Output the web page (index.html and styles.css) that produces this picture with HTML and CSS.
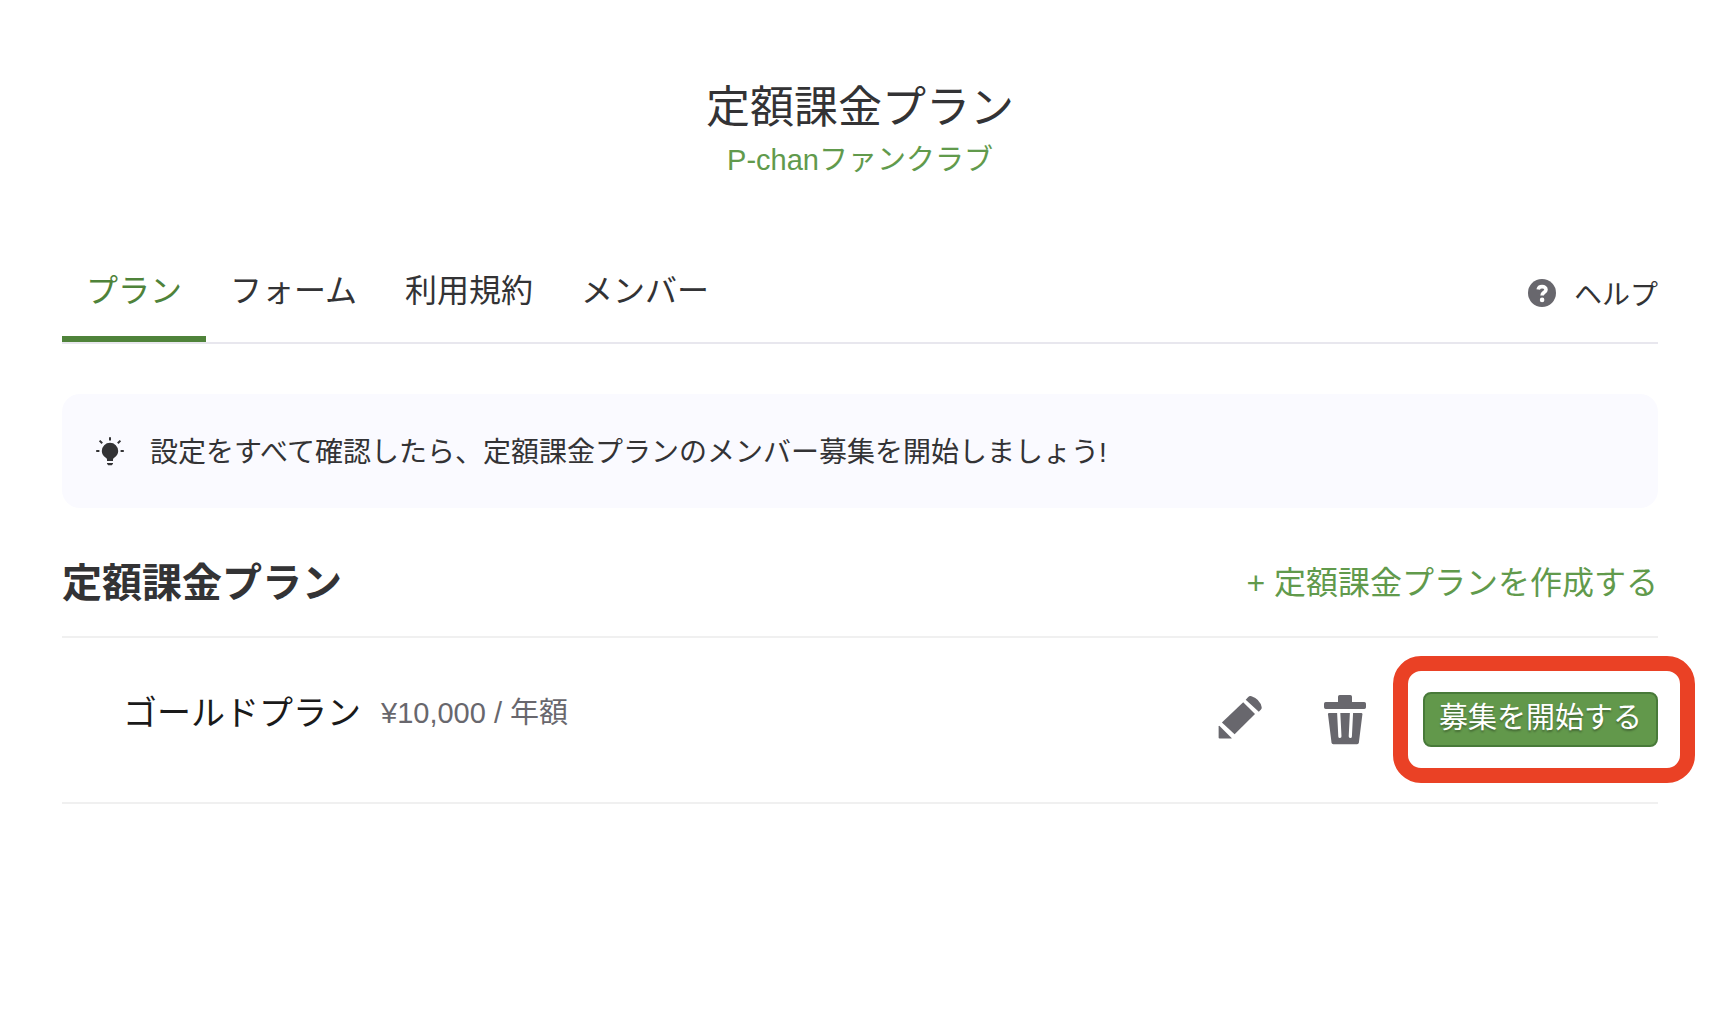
FILE: index.html
```html
<!DOCTYPE html>
<html lang="ja">
<head>
  <meta charset="UTF-8">
  <meta name="viewport" content="width=device-width, initial-scale=1.0">
  <title>定額課金プラン</title>
  <link rel="stylesheet" href="styles.css">
</head>
<body>
  <div class="container">
    <header class="page-header">
      <h1>定額課金プラン</h1>
      <a class="club" href="#">P-chanファンクラブ</a>
    </header>

    <nav class="tabs">
      <a class="tab active" href="#">プラン</a>
      <a class="tab" href="#">フォーム</a>
      <a class="tab" href="#">利用規約</a>
      <a class="tab" href="#">メンバー</a>
      <a class="help" href="#">
        <svg width="28" height="28" viewBox="0 0 28 28" aria-hidden="true">
          <circle cx="14" cy="14" r="14" fill="#68676d"/>
          <path d="M10.200 10.500c.4-2 1.900-2.900 3.900-2.900 2.200 0 3.900 1.200 3.900 3.100 0 2.700-3.900 2.600-3.900 5.800" fill="none" stroke="#fff" stroke-width="3.600"/>
          <circle cx="14.100" cy="20.900" r="2.300" fill="#fff"/>
        </svg>
        <span>ヘルプ</span>
      </a>
    </nav>

    <div class="notice">
      <svg width="28" height="32" viewBox="0 0 28 32" aria-hidden="true">
        <path d="M14 5.800a8.200 8.200 0 0 0-8.200 8.200c0 2.900 1.500 5 3.700 6.500 1 .7 1.500 1.300 1.500 2.300v1.200h6v-1.200c0-1 .5-1.600 1.500-2.300 2.200-1.500 3.700-3.600 3.700-6.500A8.200 8.200 0 0 0 14 5.800zM11 26h6v.8l-1.200 1.400h-3.600L11 26.800z" fill="#333335"/>
        <path d="M14 .3v3.200M.2 14h3.200M24.600 14h3.200M3.600 3.600l2.600 2.600M24.400 3.600l-2.600 2.600" stroke="#333335" stroke-width="2"/>
      </svg>
      <p>設定をすべて確認したら、定額課金プランのメンバー募集を開始しましょう!</p>
    </div>

    <section>
      <div class="section-header">
        <h2>定額課金プラン</h2>
        <a href="#">+ 定額課金プランを作成する</a>
      </div>
      <ul class="plan-list">
        <li class="plan">
          <span class="plan-name">ゴールドプラン</span>
          <span class="plan-price">¥10,000 / 年額</span>
          <div class="actions">
            <button class="icon-button edit" type="button" aria-label="編集">
              <svg width="44" height="44" viewBox="0 0 44 44" fill="#68676d" aria-hidden="true">
                <path d="M25.200 7.300 37 19 16.600 39.300 3.900 27.600z"/>
                <path d="M27.700 4.800 30 2.200Q31.500.6 33.500 1.200Q42 4 43.700 12.300Q43.900 13.500 43 14.400L40.800 16.800z"/>
                <path d="M1.300 30.800 13.800 43.200Q13.400 43.600 12.800 43.600H1.700Q.6 43.600.6 42.500V31.500z"/>
              </svg>
            </button>
            <button class="icon-button" type="button" aria-label="削除">
              <svg width="42" height="50" viewBox="0 0 42 50" fill="#68676d" aria-hidden="true">
                <path d="M15.700 0H26.300Q28 0 28 1.700V7H40.300Q42 7 42 8.700V12.300Q42 14 40.300 14H1.700Q0 14 0 12.300V8.700Q0 7 1.700 7H14V1.700Q14 0 15.700 0z"/>
                <path d="M5 18H37.400Q38.500 18 38.400 19.200L34.900 47.600Q34.700 49.200 33.100 49.200H9.300Q7.700 49.200 7.500 47.600L4 19.200Q3.900 18 5 18z"/>
                <path d="M14.700 17.500 15.900 41.400M27.500 17.500 26.300 41.400" fill="none" stroke="#fff" stroke-width="3.200" stroke-linecap="round"/>
              </svg>
            </button>
            <div class="highlight">
              <button class="start-button" type="button">募集を開始する</button>
            </div>
          </div>
        </li>
      </ul>
    </section>
  </div>
</body>
</html>
```
FILE: styles.css
```css
* {
  box-sizing: border-box;
}
body {
  margin: 0;
  font-family: "Liberation Sans", "Noto Sans CJK JP", sans-serif;
  color: #333335;
  background-color: #fff;
}
h1, h2, p, ul {
  margin: 0;
  padding: 0;
}
a {
  color: #619a4c;
  text-decoration: none;
}
svg {
  display: block;
}
.container {
  padding: 80px 60px 0 62px;
}
.page-header {
  text-align: center;
}
h1 {
  font-size: 44px;
  font-weight: 400;
  line-height: 56px;
}
.club {
  display: block;
  font-size: 29px;
  line-height: 48px;
}
.tabs {
  display: flex;
  margin-top: 56px;
  border-bottom: 2px solid #e8e7ee;
}
.tab {
  padding: 26px 24px 20px;
  border-bottom: 6px solid transparent;
  font-size: 32px;
  line-height: 50px;
  color: #333335;
}
.tab.active {
  color: #4f833a;
  border-bottom-color: #4f833a;
}
.help {
  display: flex;
  align-items: center;
  gap: 18px;
  margin-left: auto;
  padding-top: 3px;
  font-size: 28px;
  color: #333335;
}
.notice {
  display: flex;
  align-items: center;
  gap: 26px;
  margin-top: 50px;
  padding: 37px 34px 34px;
  border-radius: 18px;
  background-color: #fafaff;
  font-size: 28px;
  line-height: 43px;
}
.section-header {
  display: flex;
  justify-content: space-between;
  align-items: flex-start;
  margin-top: 46px;
  padding-bottom: 24px;
  border-bottom: 2px solid #f0f0f0;
  font-size: 32px;
  line-height: 58px;
}
h2 {
  font-size: 40px;
}
.plan-list {
  list-style: none;
}
.plan {
  display: flex;
  align-items: flex-start;
  gap: 20px;
  padding: 54px 0 55px 61px;
  border-bottom: 2px solid #f0f0f0;
  line-height: 42px;
}
.plan-name {
  font-size: 34px;
  color: #1a1a1a;
}
.plan-price {
  font-size: 29px;
  color: #68676d;
}
.actions {
  display: flex;
  align-items: flex-start;
  margin-left: auto;
}
.icon-button {
  margin: 3px 57px 0 0;
  padding: 0;
  border: none;
  background: none;
  cursor: pointer;
}
.icon-button.edit {
  margin-right: 62px;
}
.highlight {
  position: relative;
}
.highlight::after {
  content: "";
  position: absolute;
  inset: -36px -37px -36px -30px;
  border: 15px solid #ea4125;
  border-radius: 28px;
  pointer-events: none;
}
.start-button {
  display: block;
  padding: 0 14px 3px;
  border: 2px solid #487a39;
  border-radius: 8px;
  background-color: #62984b;
  color: #fff;
  font-family: inherit;
  font-size: 29px;
  line-height: 48px;
  text-shadow: 0 2px 2px rgba(0, 0, 0, 0.3);
  cursor: pointer;
}
.start-button:hover {
  background-color: #568742;
}
```
